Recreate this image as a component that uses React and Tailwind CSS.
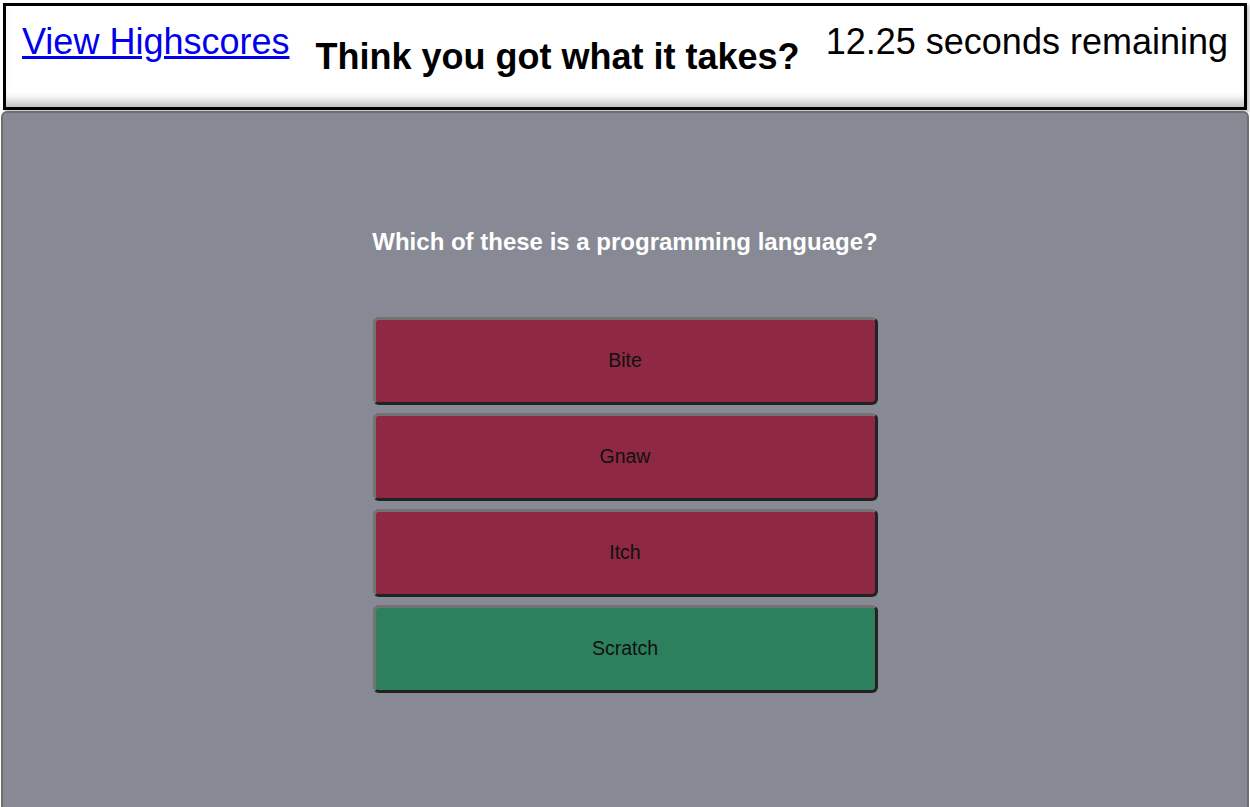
import { useState } from 'react'

const answers = [
  { text: 'Bite', correct: false },
  { text: 'Gnaw', correct: false },
  { text: 'Itch', correct: false },
  { text: 'Scratch', correct: true },
]

const App = () => {
  const [timeLeft] = useState(12.25)

  return (
    <div className="min-h-screen bg-white font-['Liberation_Sans',Arial,sans-serif] flex flex-col">
      {/* Header */}
      <header className="mx-[3px] mt-[3px] h-[107px] border-[3px] border-black bg-white shadow-[inset_0_-12px_10px_-6px_rgba(0,0,0,0.25),2px_2px_3px_rgba(0,0,0,0.25)] flex justify-between items-start px-4 pt-[15px]">
        <a href="#" className="text-[36px] leading-[41px] text-[#0000ee] underline">
          View Highscores
        </a>
        <h1 className="mt-[15px] text-[36px] leading-[41px] font-bold text-black">
          Think you got what it takes?
        </h1>
        <span className="text-[36px] leading-[41px] text-black">
          {timeLeft} seconds remaining
        </span>
      </header>

      {/* Quiz */}
      <main className="flex-1 mx-[1px] mt-px rounded-t-[6px] border-2 border-b-0 border-[#6e6e6e] bg-[#878a94] flex flex-col items-center">
        <h2 className="mt-[115px] text-[24px] leading-[28px] font-bold text-white">
          Which of these is a programming language?
        </h2>
        <div className="mt-[61px] w-[505px] flex flex-col gap-2">
          {answers.map((a) => (
            <button
              key={a.text}
              className={`h-[88px] w-full rounded-[6px] border-[3px] border-t-[#727272] border-l-[#727272] border-b-[#222] border-r-[#222] text-[19.5px] text-[#111] flex items-center justify-center ${
                a.correct ? 'bg-[#2c805e]' : 'bg-[#8e2843]'
              }`}
            >
              {a.text}
            </button>
          ))}
        </div>
      </main>
    </div>
  )
}

export default App
